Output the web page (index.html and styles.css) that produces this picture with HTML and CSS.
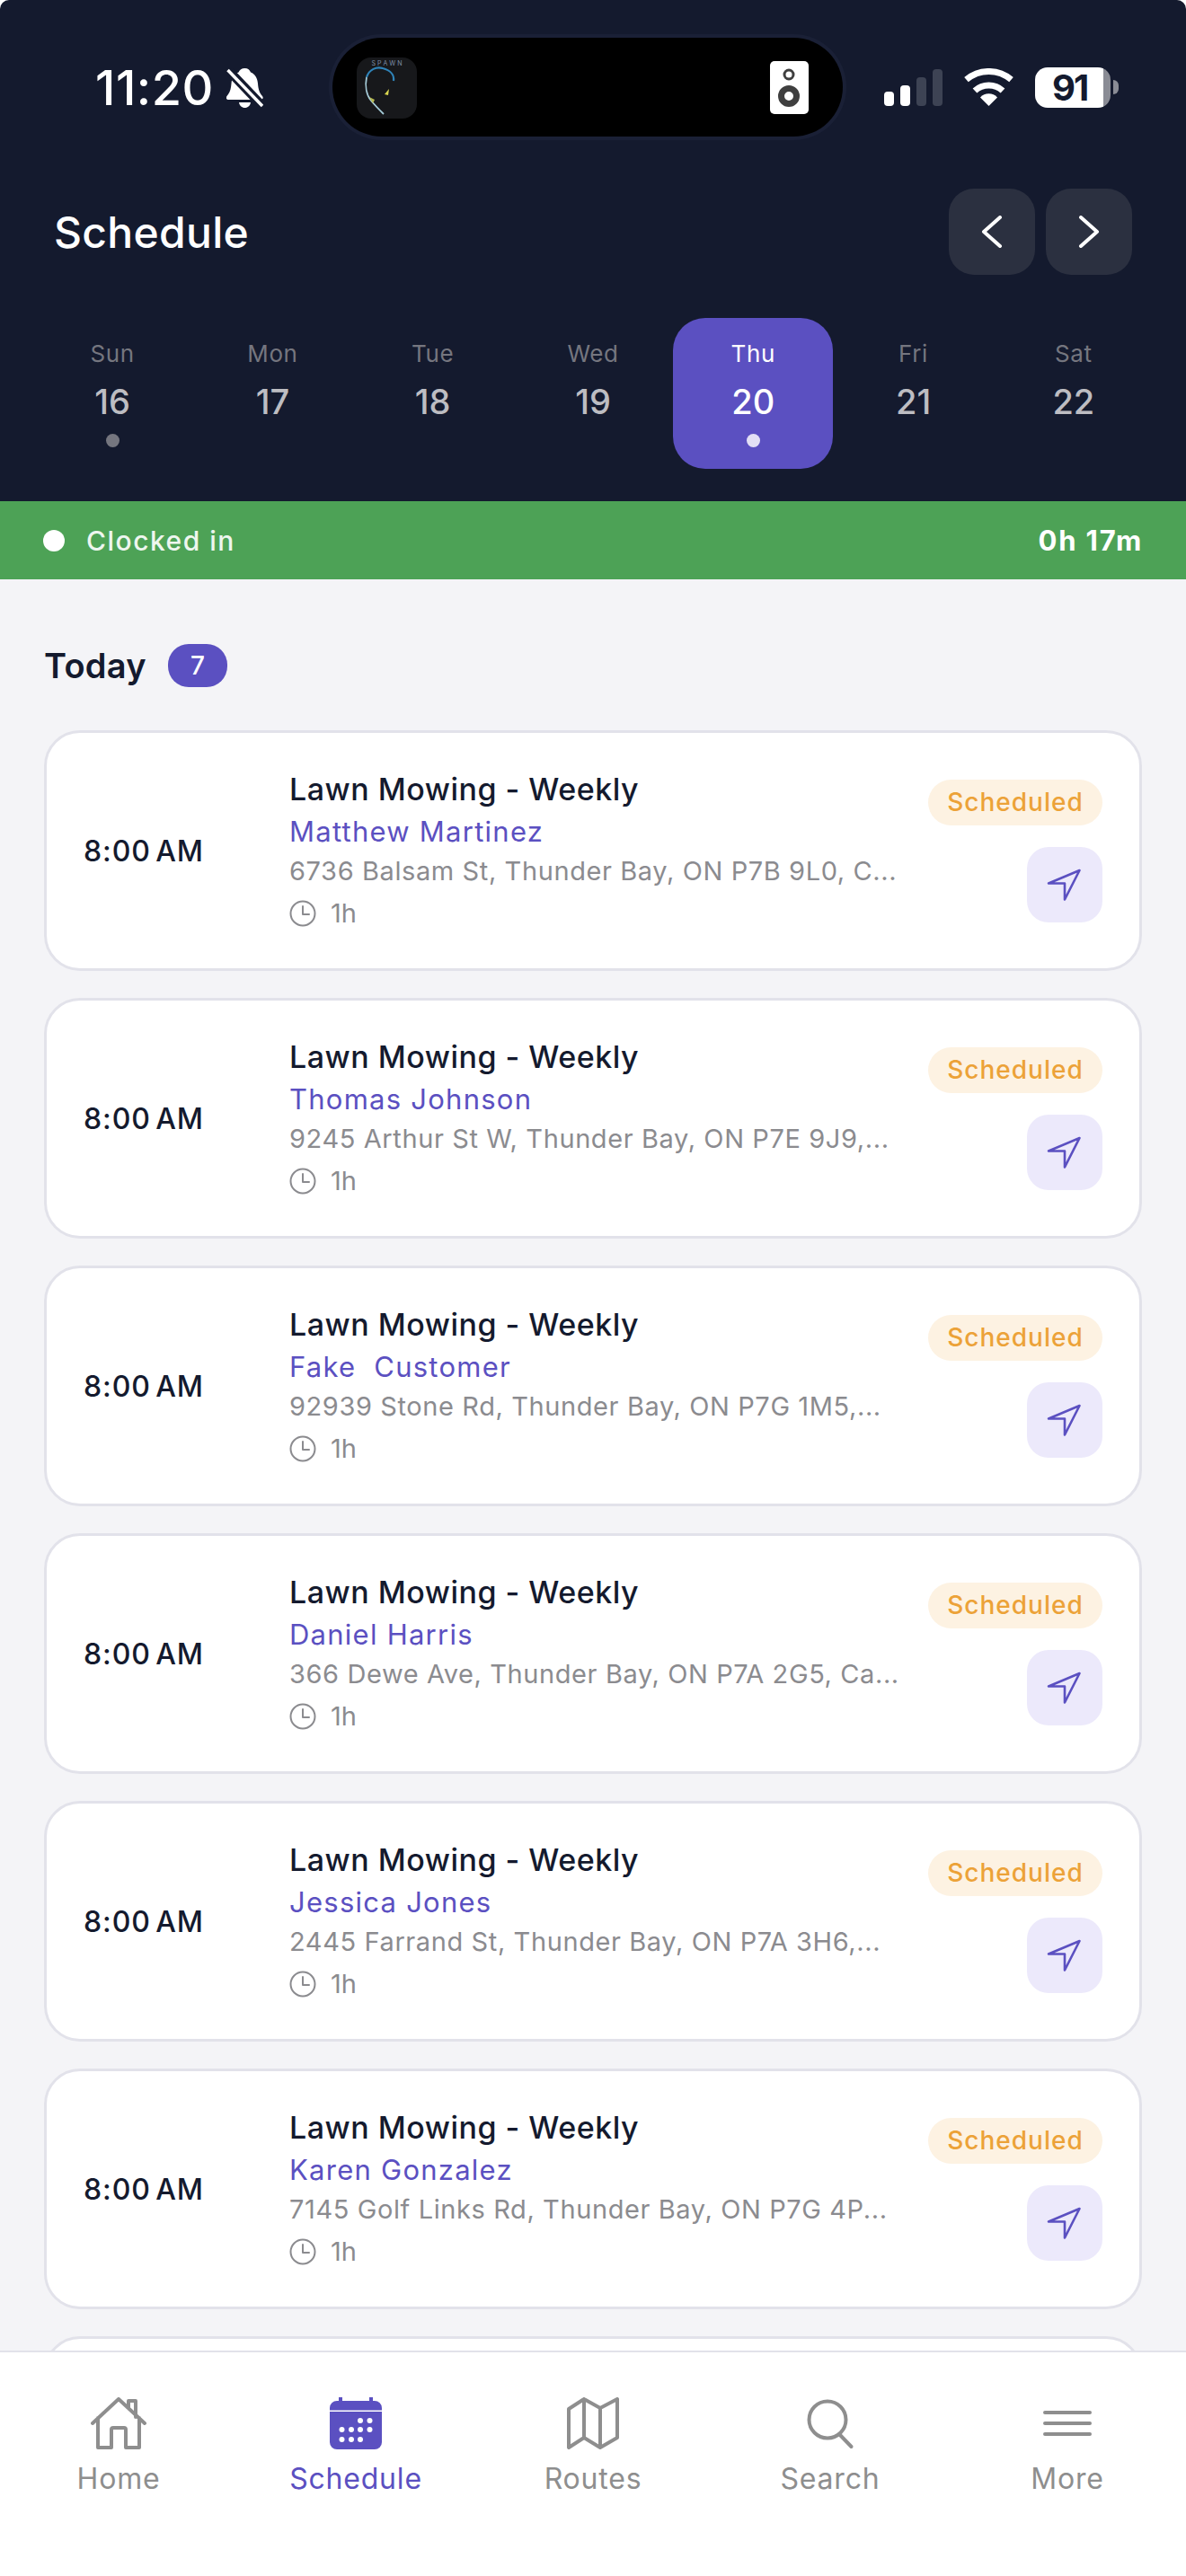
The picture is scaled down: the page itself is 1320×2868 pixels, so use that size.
FILE: index.html
```html
<!DOCTYPE html>
<html lang="en">
<head>
    <meta charset="UTF-8">
    <meta name="viewport" content="width=device-width, initial-scale=1.0">
    <title>Schedule</title>
    <link rel="stylesheet" href="styles.css">
</head>
<body>

    <!-- Shared icons -->
    <svg class="icon-defs" aria-hidden="true">
        <symbol id="icon-clock" viewBox="0 0 30 30">
            <circle cx="15" cy="15" r="13.5" fill="none" stroke="currentColor" stroke-width="2"/>
            <path d="M15 7v9h7" fill="none" stroke="currentColor" stroke-width="2" stroke-linecap="round" stroke-linejoin="round"/>
        </symbol>
        <symbol id="icon-nav" viewBox="0 0 40 36">
            <path d="M2 16.500L36.500 2 20 34.500V16.500Z" fill="none" stroke="currentColor" stroke-width="2.600" stroke-linejoin="round"/>
        </symbol>
    </svg>

    <div class="phone">
        <header class="top">
            <div class="status-bar">
                <div class="status-left">
                    <span class="clock-time">11:20</span>
                    <svg class="bell" viewBox="0 0 41 44">
                        <path d="M20.500 0c3.500 0 5.500 2 6.500 4.500 5 2 7.500 6.500 8 12.500.5 6 1.500 10 5 14 1.500 2 .5 4-2 4H2.500c-2.500 0-3.500-2-2-4 3.500-4 4.500-8 5-14 .5-6 3-10.500 8-12.500C14.500 2 17 0 20.500 0Z" fill="#fff"/>
                        <path d="M14 38h13c-.5 3.500-3 6-6.500 6S14.500 41.500 14 38Z" fill="#fff"/>
                        <path d="M2 2l38 40" stroke="#141a2e" stroke-width="10"/>
                        <path d="M1.500 2l38.500 40" stroke="#fff" stroke-width="3.500"/>
                    </svg>
                </div>
                <div class="island">
                    <svg class="album" viewBox="0 0 67 68">
                        <rect width="67" height="68" rx="16" fill="#17181b"/>
                        <text class="album-title" x="33.500" y="9">S P A W N</text>
                        <path d="M11 22C14 13 22 10 29 12c8 2 13 7 12 14" fill="none" stroke="#2f83b8" stroke-width="2.200"/>
                        <path d="M11 22c-2 10 0 20 5 26 4 5 9 10 14 15" fill="none" stroke="#a5cbd8" stroke-width="1.800"/>
                        <path d="M31 41l5-6-1 7Z" fill="#d9d650"/>
                        <path d="M14 44l6 3-2 4Z" fill="#b8b950"/>
                    </svg>
                    <svg class="speaker" viewBox="0 0 43 59">
                        <rect width="43" height="59" rx="5" fill="#fff"/>
                        <circle cx="21" cy="15" r="5" fill="none" stroke="#3f3f3f" stroke-width="3"/>
                        <circle cx="21" cy="39" r="8.500" fill="none" stroke="#3f3f3f" stroke-width="7"/>
                    </svg>
                </div>
                <div class="status-right">
                    <div class="signal">
                        <span class="bar bar-1"></span>
                        <span class="bar bar-2"></span>
                        <span class="bar bar-3"></span>
                        <span class="bar bar-4"></span>
                    </div>
                    <svg class="wifi" viewBox="0 0 57 42">
                        <path d="M3.500 12.700A38.500 38.500 0 0 1 53.500 12.700" fill="none" stroke="#fff" stroke-width="7"/>
                        <path d="M13 25A23 23 0 0 1 44 25" fill="none" stroke="#fff" stroke-width="7"/>
                        <path d="M28.500 42L19 32.500A13 13 0 0 1 38 32.500Z" fill="#fff"/>
                    </svg>
                    <div class="battery">
                        <div class="battery-body"><span class="battery-level">91</span></div>
                        <span class="battery-nub"></span>
                    </div>
                </div>
            </div>

            <div class="title-row">
                <h1 class="title">Schedule</h1>
                <div class="week-arrows">
                    <button class="arrow">
                        <svg viewBox="0 0 24 36"><path d="M21 2L3 18l18 16" fill="none" stroke="#fff" stroke-width="4" stroke-linecap="round" stroke-linejoin="round"/></svg>
                    </button>
                    <button class="arrow">
                        <svg viewBox="0 0 24 36"><path d="M3 2l18 16L3 34" fill="none" stroke="#fff" stroke-width="4" stroke-linecap="round" stroke-linejoin="round"/></svg>
                    </button>
                </div>
            </div>

            <div class="week">
                <div class="day"><span class="day-name">Sun</span><span class="day-num">16</span><span class="day-dot"></span></div>
                <div class="day"><span class="day-name">Mon</span><span class="day-num">17</span></div>
                <div class="day"><span class="day-name">Tue</span><span class="day-num">18</span></div>
                <div class="day"><span class="day-name">Wed</span><span class="day-num">19</span></div>
                <div class="day day-active"><span class="day-name">Thu</span><span class="day-num">20</span><span class="day-dot"></span></div>
                <div class="day"><span class="day-name">Fri</span><span class="day-num">21</span></div>
                <div class="day"><span class="day-name">Sat</span><span class="day-num">22</span></div>
            </div>
        </header>

        <div class="clock-bar">
            <span class="clock-dot"></span>
            <span class="clock-label">Clocked in</span>
            <span class="clock-total">0h 17m</span>
        </div>

        <main class="content">
            <div class="today">
                <h2 class="today-label">Today</h2>
                <span class="today-count">7</span>
            </div>

            <div class="cards">
                <article class="card">
                    <div class="card-time">8:00 AM</div>
                    <div class="card-info">
                        <div class="job">Lawn Mowing - Weekly</div>
                        <div class="customer">Matthew Martinez</div>
                        <div class="address">6736 Balsam St, Thunder Bay, ON P7B 9L0, C...</div>
                        <div class="length"><svg class="clock-icon"><use href="#icon-clock"/></svg>1h</div>
                    </div>
                    <div class="card-side">
                        <span class="tag">Scheduled</span>
                        <button class="nav-btn"><svg class="nav-icon"><use href="#icon-nav"/></svg></button>
                    </div>
                </article>

                <article class="card">
                    <div class="card-time">8:00 AM</div>
                    <div class="card-info">
                        <div class="job">Lawn Mowing - Weekly</div>
                        <div class="customer">Thomas Johnson</div>
                        <div class="address">9245 Arthur St W, Thunder Bay, ON P7E 9J9,...</div>
                        <div class="length"><svg class="clock-icon"><use href="#icon-clock"/></svg>1h</div>
                    </div>
                    <div class="card-side">
                        <span class="tag">Scheduled</span>
                        <button class="nav-btn"><svg class="nav-icon"><use href="#icon-nav"/></svg></button>
                    </div>
                </article>

                <article class="card">
                    <div class="card-time">8:00 AM</div>
                    <div class="card-info">
                        <div class="job">Lawn Mowing - Weekly</div>
                        <div class="customer">Fake&nbsp; Customer</div>
                        <div class="address">92939 Stone Rd, Thunder Bay, ON P7G 1M5,...</div>
                        <div class="length"><svg class="clock-icon"><use href="#icon-clock"/></svg>1h</div>
                    </div>
                    <div class="card-side">
                        <span class="tag">Scheduled</span>
                        <button class="nav-btn"><svg class="nav-icon"><use href="#icon-nav"/></svg></button>
                    </div>
                </article>

                <article class="card">
                    <div class="card-time">8:00 AM</div>
                    <div class="card-info">
                        <div class="job">Lawn Mowing - Weekly</div>
                        <div class="customer">Daniel Harris</div>
                        <div class="address">366 Dewe Ave, Thunder Bay, ON P7A 2G5, Ca...</div>
                        <div class="length"><svg class="clock-icon"><use href="#icon-clock"/></svg>1h</div>
                    </div>
                    <div class="card-side">
                        <span class="tag">Scheduled</span>
                        <button class="nav-btn"><svg class="nav-icon"><use href="#icon-nav"/></svg></button>
                    </div>
                </article>

                <article class="card">
                    <div class="card-time">8:00 AM</div>
                    <div class="card-info">
                        <div class="job">Lawn Mowing - Weekly</div>
                        <div class="customer">Jessica Jones</div>
                        <div class="address">2445 Farrand St, Thunder Bay, ON P7A 3H6,...</div>
                        <div class="length"><svg class="clock-icon"><use href="#icon-clock"/></svg>1h</div>
                    </div>
                    <div class="card-side">
                        <span class="tag">Scheduled</span>
                        <button class="nav-btn"><svg class="nav-icon"><use href="#icon-nav"/></svg></button>
                    </div>
                </article>

                <article class="card">
                    <div class="card-time">8:00 AM</div>
                    <div class="card-info">
                        <div class="job">Lawn Mowing - Weekly</div>
                        <div class="customer">Karen Gonzalez</div>
                        <div class="address">7145 Golf Links Rd, Thunder Bay, ON P7G 4P...</div>
                        <div class="length"><svg class="clock-icon"><use href="#icon-clock"/></svg>1h</div>
                    </div>
                    <div class="card-side">
                        <span class="tag">Scheduled</span>
                        <button class="nav-btn"><svg class="nav-icon"><use href="#icon-nav"/></svg></button>
                    </div>
                </article>

                <!-- Seventh job, cut off by the tab bar -->
                <article class="card"></article>
            </div>
        </main>

        <nav class="tabs">
            <div class="tab">
                <svg class="tab-icon" viewBox="0 0 62 58"><path d="M2 29L31 2l29 27M8 23v33h15V36a2 2 0 0 1 2-2h12a2 2 0 0 1 2 2v20h15V23M42 12V4h8v18"/></svg>
                <span class="tab-label">Home</span>
            </div>
            <div class="tab tab-active">
                <svg class="tab-icon tab-icon-solid" viewBox="0 0 58 58">
                    <path d="M10 0h4v4h30V0h4v4h2a8 8 0 0 1 8 8v2.500H0V12a8 8 0 0 1 8-8h2Z"/>
                    <path d="M0 16h58v34a8 8 0 0 1-8 8H8a8 8 0 0 1-8-8Z"/>
                    <g class="cal-dots">
                        <circle cx="34" cy="26" r="3"/><circle cx="44.500" cy="26" r="3"/>
                        <circle cx="13.500" cy="36" r="3"/><circle cx="24" cy="36" r="3"/><circle cx="34" cy="36" r="3"/><circle cx="44.500" cy="36" r="3"/>
                        <circle cx="13.500" cy="47" r="3"/><circle cx="24" cy="47" r="3"/><circle cx="34" cy="47" r="3"/>
                    </g>
                </svg>
                <span class="tab-label">Schedule</span>
            </div>
            <div class="tab">
                <svg class="tab-icon" viewBox="0 0 58 58"><path d="M2 13L19 2l18 10L56 2v43L37 56 19 45 2 56ZM19 2v43M37 12v44"/></svg>
                <span class="tab-label">Routes</span>
            </div>
            <div class="tab">
                <svg class="tab-icon" viewBox="0 0 58 58"><circle cx="26" cy="25" r="20.500"/><path d="M39 41l13.500 14"/></svg>
                <span class="tab-label">Search</span>
            </div>
            <div class="tab">
                <svg class="tab-icon" viewBox="0 0 58 58"><path d="M4 17h50M4 29h50M4 41h50"/></svg>
                <span class="tab-label">More</span>
            </div>
        </nav>
    </div>

</body>
</html>
```

FILE: styles.css
```css
* {
    box-sizing: border-box;
}

html {
    background-color: #fff;
}

body {
    margin: 0;
    font-family: Inter, "Noto Sans", sans-serif;
    color: #141a2e;
}

.icon-defs {
    display: none;
}

.phone {
    height: 2868px;
    display: flex;
    flex-direction: column;
    overflow: hidden;
    background-color: #f4f4f7;
    border-radius: 10px 10px 0 0;
}

/* Dark header */
.top {
    height: 558px;
    flex-shrink: 0;
    padding-top: 42px;
    background-color: #141a2e;
    color: #fff;
}

.status-bar {
    height: 110px;
    display: flex;
    align-items: center;
    padding-left: 106px;
}

.status-left {
    width: 264px;
    display: flex;
    align-items: center;
    gap: 14px;
}

.clock-time {
    font-size: 54px;
    font-weight: 500;
    letter-spacing: 0.5px;
}

.bell {
    width: 41px;
    height: 44px;
    margin-top: 2px;
}

.island {
    width: 568px;
    height: 110px;
    display: flex;
    align-items: center;
    justify-content: space-between;
    padding: 0 38px 0 27px;
    background-color: #000;
    border-radius: 55px;
    box-shadow: 0 0 0 4px #1a2036;
}

.album {
    width: 67px;
    height: 68px;
    margin-top: 2px;
}

.album-title {
    font-size: 7px;
    fill: #7f8fa8;
    text-anchor: middle;
}

.speaker {
    width: 43px;
    height: 59px;
}

.status-right {
    display: flex;
    align-items: center;
    margin-left: 46px;
}

.signal {
    display: flex;
    align-items: flex-end;
    gap: 7px;
    height: 41px;
}

.bar {
    width: 11px;
    border-radius: 4px;
    background-color: #fff;
}

.bar-1 {
    height: 16px;
}

.bar-2 {
    height: 23px;
}

.bar-3 {
    height: 32px;
    background-color: #3d4354;
}

.bar-4 {
    height: 41px;
    background-color: #3d4354;
}

.wifi {
    width: 57px;
    height: 42px;
    margin-left: 23px;
}

.battery {
    display: flex;
    align-items: center;
    margin-left: 23px;
    gap: 3px;
}

.battery-body {
    width: 84px;
    height: 45px;
    display: flex;
    align-items: center;
    padding-left: 19px;
    border-radius: 14px;
    background: linear-gradient(90deg, #fff 91%, #8a8c95 91%);
}

.battery-level {
    font-size: 40px;
    font-weight: 700;
    letter-spacing: -2px;
    color: #141a2e;
}

.battery-nub {
    width: 6px;
    height: 16px;
    border-radius: 0 6px 6px 0;
    background-color: #8a8c95;
}

.title-row {
    display: flex;
    align-items: center;
    justify-content: space-between;
    margin-top: 58px;
    padding: 0 60px;
}

.title {
    margin: 0;
    font-size: 48px;
    font-weight: 500;
    letter-spacing: 0.3px;
}

.week-arrows {
    display: flex;
    gap: 12px;
}

.arrow {
    width: 96px;
    height: 96px;
    display: flex;
    align-items: center;
    justify-content: center;
    padding: 0;
    border: none;
    border-radius: 28px;
    background-color: #2b3040;
}

.arrow svg {
    width: 24px;
    height: 36px;
}

.week {
    display: grid;
    grid-template-columns: repeat(7, 1fr);
    margin-top: 48px;
    padding: 0 36px;
}

.day {
    height: 168px;
    display: flex;
    flex-direction: column;
    align-items: center;
    padding-top: 23px;
    border-radius: 36px;
    color: #bdbdc2;
}

.day-name {
    font-size: 26px;
    line-height: 34px;
    letter-spacing: 0.6px;
    color: #75767f;
}

.day-num {
    margin-top: 13px;
    font-size: 38px;
    font-weight: 500;
    line-height: 46px;
}

.day-dot {
    width: 15px;
    height: 15px;
    margin-top: 13px;
    border-radius: 50%;
    background-color: #75767f;
}

.day-active {
    background-color: #5b50c1;
    color: #fff;
}

.day-active .day-name {
    color: #fff;
}

.day-active .day-dot {
    background-color: #e2dff5;
}

/* Clocked in strip */
.clock-bar {
    height: 87px;
    flex-shrink: 0;
    display: flex;
    align-items: center;
    padding: 0 48px 0 48px;
    background-color: #4da256;
    color: #fff;
}

.clock-dot {
    width: 24px;
    height: 24px;
    border-radius: 50%;
    background-color: #fff;
}

.clock-label {
    margin-left: 24px;
    font-size: 30px;
    font-weight: 500;
    letter-spacing: 1.5px;
    color: #eef6ef;
}

.clock-total {
    margin-left: auto;
    font-size: 31px;
    font-weight: 700;
    letter-spacing: 1.8px;
}

/* Job list */
.content {
    flex: 1;
    min-height: 0;
    overflow: hidden;
    padding: 72px 49px 0;
}

.today {
    display: flex;
    align-items: center;
    gap: 24px;
    height: 48px;
    margin-bottom: 48px;
}

.today-label {
    margin: 0;
    font-size: 38px;
    font-weight: 600;
    letter-spacing: 0.3px;
}

.today-count {
    width: 66px;
    height: 48px;
    display: flex;
    align-items: center;
    justify-content: center;
    border-radius: 23px;
    background-color: #5b50c1;
    color: #fff;
    font-size: 28px;
    font-weight: 500;
}

.cards {
    display: flex;
    flex-direction: column;
    gap: 30px;
}

.card {
    height: 268px;
    flex-shrink: 0;
    display: flex;
    align-items: center;
    padding: 0 41px 0 41px;
    background-color: #fff;
    border: 3px solid #e2e2ea;
    border-radius: 40px;
}

.card-time {
    width: 229px;
    flex-shrink: 0;
    font-size: 32px;
    font-weight: 500;
    letter-spacing: 0.9px;
    word-spacing: -4px;
}

.card-info {
    flex: 1;
    min-width: 0;
    padding-top: 2px;
}

.job,
.customer,
.address,
.length {
    height: 44px;
    line-height: 44px;
    white-space: nowrap;
}

.job {
    font-size: 34px;
    font-weight: 500;
    letter-spacing: 0.5px;
}

.customer {
    margin-top: 3px;
    font-size: 31px;
    letter-spacing: 1.25px;
    color: #5b50c1;
}

.address {
    font-size: 29px;
    letter-spacing: 0.6px;
    color: #8b8b8f;
}

.length {
    display: flex;
    align-items: center;
    gap: 16px;
    margin-top: 3px;
    font-size: 29px;
    color: #8b8b8f;
}

.clock-icon {
    width: 30px;
    height: 30px;
}

.card-side {
    display: flex;
    flex-direction: column;
    align-items: flex-end;
    gap: 24px;
}

.tag {
    width: 194px;
    height: 51px;
    display: flex;
    align-items: center;
    justify-content: center;
    border-radius: 26px;
    background-color: #fdf2e2;
    color: #eca238;
    font-size: 28px;
    font-weight: 500;
    letter-spacing: 1px;
}

.nav-btn {
    width: 84px;
    height: 84px;
    display: flex;
    align-items: center;
    justify-content: center;
    padding: 0;
    border: none;
    border-radius: 24px;
    background-color: #ece9fb;
    color: #5b50c1;
}

.nav-icon {
    width: 40px;
    height: 36px;
}

/* Bottom tabs */
.tabs {
    height: 251px;
    flex-shrink: 0;
    display: grid;
    grid-template-columns: repeat(5, 1fr);
    padding-top: 50px;
    background-color: #fff;
    border-top: 2px solid #e2e2ea;
}

.tab {
    display: flex;
    flex-direction: column;
    align-items: center;
    color: #8e8e8e;
}

.tab-active {
    color: #5b50c1;
}

.tab-icon {
    height: 58px;
    width: 62px;
    fill: none;
    stroke: currentColor;
    stroke-width: 4;
    stroke-linecap: round;
    stroke-linejoin: round;
}

.tab-icon-solid {
    fill: currentColor;
    stroke: none;
}

.cal-dots {
    fill: #fff;
}

.tab-label {
    margin-top: 14px;
    font-size: 32px;
    line-height: 38px;
    letter-spacing: 0.8px;
}
```
